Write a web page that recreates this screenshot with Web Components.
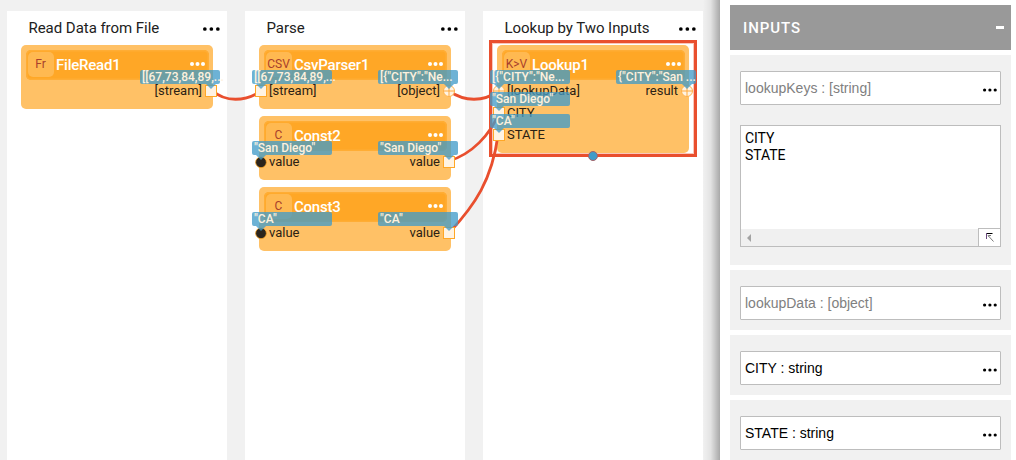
<!DOCTYPE html>
<html lang="en">
<head>
<meta charset="utf-8">
<title>Flow editor</title>
<style>
html,body{margin:0;height:100%;overflow:hidden;background:#fff;font-family:Roboto,sans-serif}
</style>
</head>
<body>
<flow-app></flow-app>
<script>
const define = (name, html, setup) => {
  const t = document.createElement('template');
  t.innerHTML = html;
  customElements.define(name, class extends HTMLElement {
    constructor() {
      super();
      this.attachShadow({mode: 'open'}).append(t.content.cloneNode(true));
    }
    connectedCallback() { if (setup) setup(this, this.shadowRoot); }
  });
};

define('more-dots', `
<style>
:host{display:block;flex:none}
svg{display:block}
</style><svg height="4" fill="currentColor"></svg>`, (h, r) => {
  const d = +h.getAttribute('dot'), step = +h.getAttribute('step'), s = r.querySelector('svg');
  s.setAttribute('width', d + 2 * step);
  s.innerHTML = [0, 1, 2].map(i => `<circle cx="${d / 2 + i * step}" cy="2" r="${d / 2}"/>`).join('');
});

define('flow-stage', `
<style>
:host{display:block;box-sizing:border-box;width:220px;background:#fff;padding:0 14px;flex:none}
header{display:flex;justify-content:space-between;align-items:center;height:33.5px;padding:0 0 0 7.5px;margin-right:-7px;font-size:15px;letter-spacing:-.04px;color:#212121}
header span{white-space:nowrap}
more-dots{color:#000;margin-top:3px}
.nodes{display:flex;flex-direction:column;gap:7px}
</style>
<header><span></span><more-dots dot="3.7" step="6.5"></more-dots></header>
<div class="nodes"><slot></slot></div>`, (h, r) => {
  r.querySelector('span').textContent = h.getAttribute('label');
});

define('value-tag', `
<style>
:host{display:block;position:absolute;z-index:3;top:-10px;box-sizing:border-box;width:80px;height:14px;padding:0 0 0 2px;border-radius:2px;background:rgba(65,155,200,.77);color:#fdf1de;font:500 12px/14px Roboto,sans-serif;white-space:nowrap}
:host([side=in]){left:-7px}
:host([side=out]){right:-7px}
i{position:absolute;top:14px;border:5px solid transparent;border-bottom:0;border-top-color:rgba(65,155,200,.77)}
:host([side=in]) i{left:4px}
:host([side=out]) i{right:4px}
</style><slot></slot><i></i>`);

define('flow-socket', `
<style>
:host{display:block;position:absolute;z-index:2;top:5.5px}
:host([side=in]){left:-4px}
:host([side=out]){right:-4px}
svg{display:block;overflow:visible}
</style><svg width="12" height="12"></svg>`, (h, r) => {
  r.querySelector('svg').innerHTML = {
    square: '<rect x=".5" y=".5" width="11" height="11" fill="#fff3e3" stroke="#ffa726"/>',
    dot: '<circle cx="6" cy="6.3" r="5.4" fill="#2b241c" stroke="#ffa726" stroke-width=".8"/>',
    plus: '<circle cx="6" cy="6" r="5.5" fill="#fff3e3" stroke="#ffb44e"/><path d="M6 .5v11M.5 6h11" stroke="#ffa93a"/>'
  }[h.getAttribute('kind')];
});

define('port-row', `
<style>
:host{display:flex;position:relative;justify-content:space-between;height:22px;padding:0 11px 0 10px;margin:0;line-height:22px;font-size:13px;color:#2b2114}
</style>
<span id="a"></span><span id="b"></span>`, (h, r) => {
  for (const [side, id] of [['in', 'a'], ['out', 'b']]) {
    const v = h.getAttribute(side);
    if (!v) continue;
    const [label, kind, tag] = v.split('|');
    r.getElementById(id).textContent = label;
    const s = document.createElement('flow-socket');
    s.setAttribute('side', side);
    s.setAttribute('kind', kind);
    const t = document.createElement('value-tag');
    t.setAttribute('side', side);
    t.textContent = tag;
    r.append(s, t);
  }
});

define('flow-node', `
<style>
:host{display:block;position:relative;box-sizing:border-box;width:192px;height:64px;border-radius:5px;background:#ffc166;padding-top:5.5px}
:host([selected]){height:108px}
header{display:flex;align-items:center;box-sizing:border-box;height:29.5px;margin:0 4.5px;padding:0 4px 0 2px;border-radius:5px;background:#ffa726;box-shadow:inset 0 0 0 1.5px #ffad35}
.icon{width:26px;height:25px;border-radius:5px;background:#ffb951;color:#a8402c;font-size:12px;line-height:24px;text-align:center;flex:none}
b{font-weight:500;font-size:15px;letter-spacing:-.22px;color:#fff;margin-left:2.5px;flex:1}
more-dots{color:#fff;margin-top:-1px}
.frame{display:none}
:host([selected]) .frame{display:block;position:absolute;z-index:0;box-sizing:border-box;left:-8px;top:-5px;width:208px;height:117px;border:3px solid #e94f2e;box-shadow:inset 0 0 0 1px #f9c7bb}
.grip{position:absolute;left:96px;bottom:-7px;width:8px;height:8px;border:1px solid #a46268;border-radius:50%;background:#419bc8}
</style>
<header><span class="icon"></span><b></b><more-dots dot="4" step="5.5"></more-dots></header>
<slot></slot>
<div class="frame"><div class="grip"></div></div>`, (h, r) => {
  r.querySelector('.icon').textContent = h.getAttribute('icon');
  r.querySelector('b').textContent = h.getAttribute('label');
});

define('flow-canvas', `
<style>
:host{display:flex;position:relative;box-sizing:border-box;gap:18px;width:720px;height:460px;padding:11px 0 0 7px;background:#f1f1f1;flex:none}
svg{position:absolute;z-index:1;left:0;top:0;pointer-events:none}
.edge{position:absolute;z-index:4;right:0;top:0;bottom:0;width:17px;background:linear-gradient(90deg,rgba(0,0,0,0),rgba(0,0,0,.06) 45%,rgba(0,0,0,.3))}
</style>
<slot></slot>
<svg width="720" height="460" fill="none" stroke="#e94f2e" stroke-width="2.8">
<path d="M213 91C225 102 245 102 261 91"/>
<path d="M449 91C465 102 483 102 499 91"/>
<path d="M449 161C472 154 490 135 499 113"/>
<path d="M449 233C475 205 492 180 498 135"/>
</svg>
<div class="edge"></div>`);

define('input-field', `
<style>
:host{display:flex;align-items:center;justify-content:space-between;box-sizing:border-box;height:34px;padding:0 3px 0 4px;border:1px solid #bdbdbd;border-radius:1px;background:#fff;font:14px "Liberation Sans",Arial,sans-serif;color:#000}
:host([muted]){color:#808080}
span{white-space:pre}
more-dots{color:#000;margin-top:4px}
</style><span><slot></slot></span><more-dots dot="3.2" step="5.3"></more-dots>`);

define('text-editor', `
<style>
:host{display:flex;flex-direction:column;box-sizing:border-box;height:122px;margin-top:20px;border:1px solid #bdbdbd;background:#fff;font:14px/17px Roboto,sans-serif;color:#000}
.text{flex:1;padding:4px;white-space:pre;letter-spacing:-.08px}
.bar{display:flex;justify-content:space-between;align-items:center;height:17px;background:#f0f0f0;padding-left:6px}
.tri{border:4px solid transparent;border-left:0;border-right-color:#a3a3a3}
.pop{display:flex;align-items:center;justify-content:center;width:21px;height:17px;margin-top:-1px;border:solid #bdbdbd;border-width:1px 0 0 1px;background:#fff}
</style>
<div class="text"><slot></slot></div>
<div class="bar"><i class="tri"></i><span class="pop"><svg width="8" height="9" fill="none"><path d="M1 .5H6.5" stroke="#000"/><path d="M.5 0V6" stroke="#6b4a80"/><path d="M2.5 3.5V2.5H5" stroke="#555" stroke-width=".8"/><path d="M2 2.5l5.5 6" stroke="#777"/></svg></span></div>`);

define('panel-section', `
<style>
:host{display:block;background:#f1f1f1;padding:16px 10px 10px}
:host([tall]){padding-bottom:18px}
</style><slot></slot>`);

define('inputs-panel', `
<style>
:host{display:flex;flex-direction:column;gap:5px;box-sizing:border-box;flex:1;padding:5px 5px 0 10px;background:#fff}
header{display:flex;justify-content:space-between;align-items:center;height:45px;padding:0 7px 0 13px;background:#999;color:#fff;font-size:15px;font-weight:500;letter-spacing:.95px}
header i{width:8px;height:2.5px;background:#fff}
</style><header><span>INPUTS</span><i></i></header><slot></slot>`);

define('flow-app', `
<style>:host{display:flex;width:1016px;height:460px;overflow:hidden}</style>
<flow-canvas>
<flow-stage label="Read Data from File">
<flow-node icon="Fr" label="FileRead1"><port-row out="[stream]|square|[[67,73,84,89,..."></port-row></flow-node>
</flow-stage>
<flow-stage label="Parse">
<flow-node icon="CSV" label="CsvParser1"><port-row in="[stream]|square|[[67,73,84,89,..." out='[object]|plus|[{"CITY":"Ne...'></port-row></flow-node>
<flow-node icon="C" label="Const2"><port-row in='value|dot|"San Diego"' out='value|square|"San Diego"'></port-row></flow-node>
<flow-node icon="C" label="Const3"><port-row in='value|dot|"CA"' out='value|square|"CA"'></port-row></flow-node>
</flow-stage>
<flow-stage label="Lookup by Two Inputs">
<flow-node selected icon="K&gt;V" label="Lookup1">
<port-row in='[lookupData]|plus|[{"CITY":"Ne...' out='result|plus|{"CITY":"San ...'></port-row>
<port-row in='CITY|square|"San Diego"'></port-row>
<port-row in='STATE|square|"CA"'></port-row>
</flow-node>
</flow-stage>
</flow-canvas>
<inputs-panel>
<panel-section tall><input-field muted>lookupKeys : [string]</input-field><text-editor>CITY
STATE</text-editor></panel-section>
<panel-section><input-field muted>lookupData : [object]</input-field></panel-section>
<panel-section><input-field>CITY : string</input-field></panel-section>
<panel-section><input-field>STATE : string</input-field></panel-section>
</inputs-panel>`);
</script>
</body>
</html>
